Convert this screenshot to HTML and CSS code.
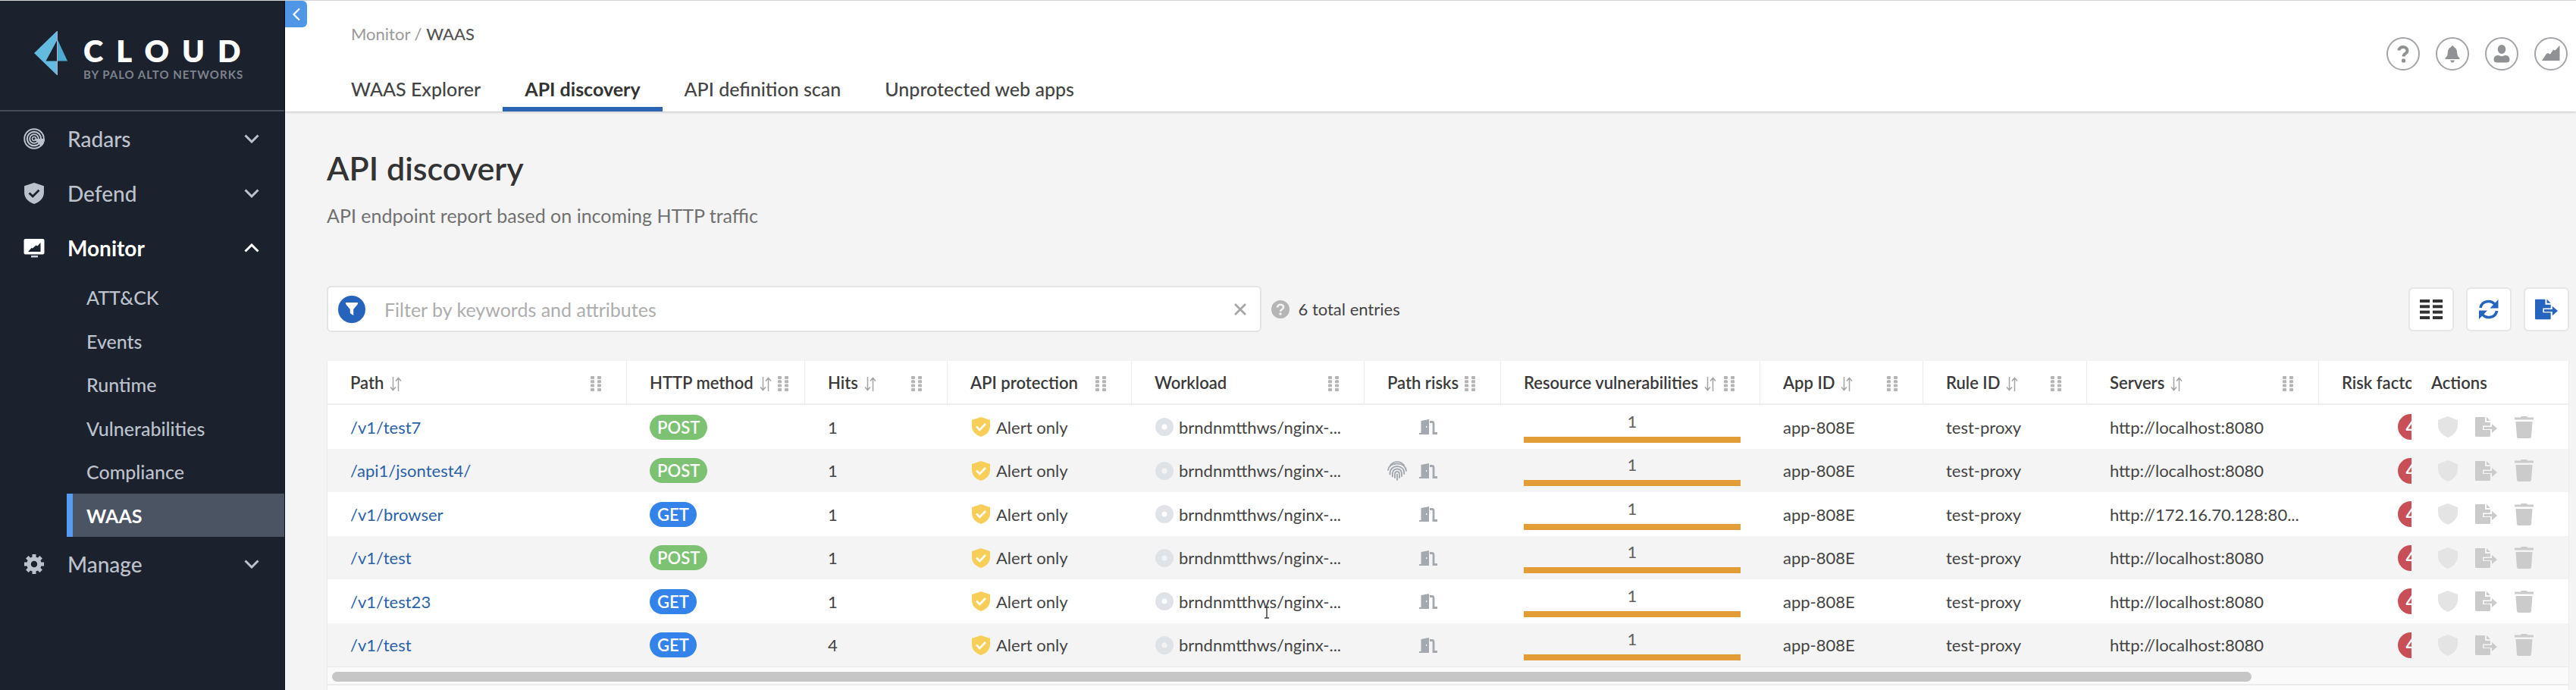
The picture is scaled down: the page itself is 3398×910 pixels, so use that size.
FILE: index.html
```html
<!DOCTYPE html>
<html lang="en">
<head>
<meta charset="utf-8">
<title>API discovery - WAAS</title>
<link rel="stylesheet" href="styles.css">
</head>
<body>
<svg class="sprite" aria-hidden="true">
  <symbol id="i-sort" viewBox="0 0 16 19"><path d="M4.5 0V17M1 13.500l3.500 4 3.500-4M11.500 19V2M8 5.500l3.500-4 3.500 4" fill="none" stroke="currentColor" stroke-width="1.500"/></symbol>
  <symbol id="i-drag" viewBox="0 0 14 20"><g fill="currentColor"><rect x="0" y="0" width="5" height="4" rx="1"/><rect x="9" y="0" width="5" height="4" rx="1"/><rect x="0" y="5.300" width="5" height="4" rx="1"/><rect x="9" y="5.300" width="5" height="4" rx="1"/><rect x="0" y="10.600" width="5" height="4" rx="1"/><rect x="9" y="10.600" width="5" height="4" rx="1"/><rect x="0" y="16" width="5" height="4" rx="1"/><rect x="9" y="16" width="5" height="4" rx="1"/></g></symbol>
  <symbol id="i-check-shield" viewBox="0 0 24 26"><path d="M12 0 24 4V12C24 19 18.500 24 12 26 5.500 24 0 19 0 12V4Z" fill="currentColor"/><path class="tick" d="M6 12.500l4.300 4.300L18 9" fill="none" stroke-width="2.600"/></symbol>
  <symbol id="i-shield" viewBox="0 0 26 28"><path d="M13 0 26 5V12C26 20 19 26 13 28 7 26 0 20 0 12V5Z" fill="currentColor"/></symbol>
  <symbol id="i-disc" viewBox="0 0 24 24"><path fill-rule="evenodd" d="M12 0a12 12 0 1 0 0 24 12 12 0 0 0 0-24Zm0 8.500a3.500 3.500 0 1 1 0 7 3.500 3.500 0 0 1 0-7Z" fill="currentColor"/></symbol>
  <symbol id="i-door" viewBox="0 0 24 20"><path fill-rule="evenodd" d="M2.500 2 13 0V20H0V18H2.500ZM9 9v2h1.300V9Z" fill="currentColor"/><path d="M14 3.500h3Q19 3.500 19 6V18.500H24" fill="none" stroke="currentColor" stroke-width="2.800"/></symbol>
  <symbol id="i-finger" viewBox="0 0 26 26"><g fill="none" stroke="currentColor" stroke-width="1.900" stroke-linecap="round"><path d="M4 5.500C8.500-.4 17.500-.4 22 5.500"/><path d="M1 12C2 4.500 8 3.600 13 3.600S24 5 25 13"/><path d="M3.500 17.500C3.200 10 8 7 13 7s9.500 3 9.200 10"/><path d="M6.800 20.500C6.300 14 8 10.500 13 10.500s6.500 3.500 6 9.500"/><path d="M10 22c-.3-5-.3-8 3-8s3.300 3 3 8"/><path d="M13 17.500V25"/></g></symbol>
  <symbol id="i-export" viewBox="0 0 29 26"><path d="M1 0H13V7H20V11.500H10V17H20V24.500Q20 26 18.500 26H1.500Q0 26 0 24.500V1Q0 0 1 0ZM15 0 20 5H15Z" fill="currentColor"/><path d="M11.500 13H22V9L29 15 22 21V16H11.500Z" fill="currentColor"/></symbol>
  <symbol id="i-trash" viewBox="0 0 25 29"><path d="M8 1.500Q8 0 9.500 0h6Q17 0 17 1.500H25V4.500H0V1.500ZM1.500 7H23.500L22 27Q21.800 29 20 29H5Q3.200 29 3 27Z" fill="currentColor"/></symbol>
  <symbol id="i-chevron" viewBox="0 0 20 12"><path d="M1.500 1.500 10 10 18.500 1.500" fill="none" stroke="currentColor" stroke-width="3"/></symbol>
</svg>

<div class="app">
  <aside class="sidebar">
    <div class="brand">
      <svg class="brand-mark" viewBox="0 0 44 58" aria-hidden="true"><path d="M30 0V12.500L15.500 39.500H30V58L0 29Z" fill="#63bbdf"/><path d="M31 11.500 44 39.500H31Z" fill="#4da9cf"/><path d="M30.500 0V58" stroke="#b9a8c8" stroke-width="1"/></svg>
      <div class="brand-text"><span class="brand-name">CLOUD</span><span class="brand-sub">BY PALO ALTO NETWORKS</span></div>
    </div>
    <nav class="nav">
      <button class="nav-item"><svg class="nav-icon" viewBox="0 0 28 28"><g fill="none" stroke="currentColor"><circle cx="14" cy="14" r="12.800" stroke-width="2"/><circle cx="14" cy="14" r="9.200" stroke-width="2.200"/><circle cx="14" cy="14" r="5.800" stroke-width="2"/><circle cx="14" cy="14" r="2.500" stroke-width="1.500"/></g><path d="M14 14H28A14 14 0 0 1 23.500 24.200Z" fill="currentColor"/></svg><span>Radars</span><svg class="chev"><use href="#i-chevron"/></svg></button>
      <button class="nav-item"><svg class="nav-icon shield-dark"><use href="#i-check-shield"/></svg><span>Defend</span><svg class="chev"><use href="#i-chevron"/></svg></button>
      <button class="nav-item is-open" aria-expanded="true"><svg class="nav-icon" viewBox="0 0 28 28"><path fill-rule="evenodd" d="M2.500 2H25.500Q27.500 2 27.500 4V20.500Q27.500 22.500 25.500 22.500H2.500Q.5 22.500 .5 20.500V4Q.5 2 2.500 2ZM6 19H22.500V7L18.500 11.500 16.500 10.500 12 14.500 10.500 14Z" fill="currentColor"/><path d="M10 24h9v2.500h-9Z" fill="currentColor" opacity=".8"/></svg><span>Monitor</span><svg class="chev"><use href="#i-chevron"/></svg></button>
      <ul class="subnav">
        <li><a href="#">ATT&amp;CK</a></li>
        <li><a href="#">Events</a></li>
        <li><a href="#">Runtime</a></li>
        <li><a href="#">Vulnerabilities</a></li>
        <li><a href="#">Compliance</a></li>
        <li><a href="#" class="is-active" aria-current="page">WAAS</a></li>
      </ul>
      <button class="nav-item"><svg class="nav-icon" viewBox="0 0 28 28"><circle cx="14" cy="14" r="7" fill="none" stroke="currentColor" stroke-width="5.500"/><g stroke="currentColor" stroke-width="5"><path d="M14 1V6M14 22V27M1 14H6M22 14H27M4.800 4.800l3.500 3.500M19.700 19.700l3.500 3.500M4.800 23.200l3.500-3.500M19.700 8.300l3.500-3.500"/></g></svg><span>Manage</span><svg class="chev"><use href="#i-chevron"/></svg></button>
    </nav>
  </aside>

  <main class="main">
    <button class="collapse" aria-label="Collapse menu"><svg viewBox="0 0 12 18"><path d="M10 1.500 2.500 9 10 16.500" fill="none" stroke="#fff" stroke-width="2.200"/></svg></button>
    <header class="topbar">
      <div class="topbar-left">
        <div class="crumbs"><a href="#">Monitor</a> / <span>WAAS</span></div>
        <nav class="tabs">
          <a href="#">WAAS Explorer</a>
          <a href="#" class="is-active">API discovery</a>
          <a href="#">API definition scan</a>
          <a href="#">Unprotected web apps</a>
        </nav>
      </div>
      <div class="top-icons">
        <button aria-label="Help"><svg viewBox="0 0 24 24"><path d="M6.500 7.500C6.500 1.500 17.500 1.500 17.500 8c0 4-5 3.300-5 7.500" fill="none" stroke="currentColor" stroke-width="4"/><rect x="10" y="18.500" width="5" height="5" rx="1.500" fill="currentColor"/></svg></button>
        <button aria-label="Alerts"><svg viewBox="0 0 24 24"><path d="M12 1c1 0 1.500 1.500 2.500 2.500 3 1.500 3.500 4 3.800 8 .2 3 1.200 4.500 3.200 6V19h-19v-1.500c2-1.500 3-3 3.200-6 .3-4 .8-6.500 3.800-8C10.500 2.500 11 1 12 1ZM9 20.500h6q-1 3-3 3t-3-3Z" fill="currentColor"/></svg></button>
        <button aria-label="Account"><svg viewBox="0 0 24 24"><ellipse cx="12" cy="6" rx="5.300" ry="6" fill="currentColor"/><path d="M1.500 20c0-5 3-6 6.500-6 2.500 1.500 5.500 1.500 8 0 3.500 0 6.500 1 6.500 6 0 2.500-2 3.500-4 3.500h-13c-2 0-4-1-4-3.500Z" fill="currentColor"/></svg></button>
        <button aria-label="Usage"><svg viewBox="0 0 24 24"><path d="M0 21 6 12l2-1 3 1.500 4-6 2.500 1L23.500 1V21Z" fill="currentColor"/></svg></button>
      </div>
    </header>

    <section class="content">
      <h1>API discovery</h1>
      <p class="desc">API endpoint report based on incoming HTTP traffic</p>
      <div class="toolbar">
        <div class="filter">
          <span class="funnel"><svg viewBox="0 0 16 17"><path d="M0 0H16V2L10.200 9V17L5.800 14V9L0 2Z" fill="#fff"/></svg></span>
          <input type="text" aria-label="Filter" placeholder="Filter by keywords and attributes">
          <button class="clear" aria-label="Clear"><svg viewBox="0 0 16 16"><path d="M1 1 15 15M15 1 1 15" stroke="currentColor" stroke-width="2.600"/></svg></button>
        </div>
        <svg class="hint" viewBox="0 0 24 24"><circle cx="12" cy="12" r="12" fill="#b5b5b5"/><path d="M8 9.500C8 4.500 16 4.500 16 9.300c0 3-4 2.700-4 5.500" fill="none" stroke="#f4f4f4" stroke-width="2.600"/><circle cx="12" cy="18" r="1.700" fill="#f4f4f4"/></svg>
        <span class="total">6 total entries</span>
        <div class="tools">
          <button aria-label="Columns"><svg viewBox="0 0 30 28"><g fill="#333"><rect y="1" width="13" height="4"/><rect x="17" y="1" width="13" height="4"/><rect y="8.300" width="13" height="4"/><rect x="17" y="8.300" width="13" height="4"/><rect y="15.600" width="13" height="4"/><rect x="17" y="15.600" width="13" height="4"/><rect y="23" width="13" height="4"/><rect x="17" y="23" width="13" height="4"/></g></svg></button>
          <button aria-label="Refresh"><svg viewBox="0 0 30 28"><g fill="none" stroke="#2565c0" stroke-width="3.600"><path d="M4 12C5.500 2.500 18 .8 23.500 8"/><path d="M25.500 16C24 25.500 11.500 27.200 6 20"/></g><path d="M27.500 1V12.500H16.500ZM2 27V15.500H13Z" fill="#2565c0"/></svg></button>
          <button class="blue" aria-label="Export"><svg viewBox="0 0 29 26"><use href="#i-export"/></svg></button>
        </div>
      </div>

      <div class="card">
        <table class="grid">
          <colgroup><col class="c-path"><col class="c-method"><col class="c-hits"><col class="c-prot"><col class="c-work"><col class="c-risks"><col class="c-vuln"><col class="c-app"><col class="c-rule"><col class="c-serv"><col class="c-factor"><col class="c-act"></colgroup>
          <thead>
            <tr>
              <th><div class="h"><span>Path</span><svg class="sort"><use href="#i-sort"/></svg><svg class="drag"><use href="#i-drag"/></svg></div></th>
              <th><div class="h"><span>HTTP method</span><svg class="sort"><use href="#i-sort"/></svg><svg class="drag"><use href="#i-drag"/></svg></div></th>
              <th><div class="h"><span>Hits</span><svg class="sort"><use href="#i-sort"/></svg><svg class="drag"><use href="#i-drag"/></svg></div></th>
              <th><div class="h"><span>API protection</span><svg class="drag"><use href="#i-drag"/></svg></div></th>
              <th><div class="h"><span>Workload</span><svg class="drag"><use href="#i-drag"/></svg></div></th>
              <th><div class="h"><span>Path risks</span><svg class="drag"><use href="#i-drag"/></svg></div></th>
              <th><div class="h"><span>Resource vulnerabilities</span><svg class="sort"><use href="#i-sort"/></svg><svg class="drag"><use href="#i-drag"/></svg></div></th>
              <th><div class="h"><span>App ID</span><svg class="sort"><use href="#i-sort"/></svg><svg class="drag"><use href="#i-drag"/></svg></div></th>
              <th><div class="h"><span>Rule ID</span><svg class="sort"><use href="#i-sort"/></svg><svg class="drag"><use href="#i-drag"/></svg></div></th>
              <th><div class="h"><span>Servers</span><svg class="sort"><use href="#i-sort"/></svg><svg class="drag"><use href="#i-drag"/></svg></div></th>
              <th class="factor">Risk factors</th>
              <th class="act">Actions</th>
            </tr>
          </thead>
          <tbody>
            <tr>
              <td><a href="#">/v1/test7</a></td><td><span class="pill post">POST</span></td><td>1</td>
              <td><div class="ic alert"><svg><use href="#i-check-shield"/></svg>Alert only</div></td>
              <td><div class="ic image"><svg><use href="#i-disc"/></svg>brndnmtthws/nginx-...</div></td>
              <td><div class="risks"><i></i><svg class="door"><use href="#i-door"/></svg></div></td>
              <td class="vuln">1<div class="bar"></div></td><td>app-808E</td><td>test-proxy</td><td>http://localhost:8080</td>
              <td class="factor"><span class="count">4</span></td>
              <td class="act"><div class="acts"><button aria-label="Protect"><svg><use href="#i-shield"/></svg></button><button aria-label="Export"><svg><use href="#i-export"/></svg></button><button aria-label="Delete"><svg><use href="#i-trash"/></svg></button></div></td>
            </tr>
            <tr>
              <td><a href="#">/api1/jsontest4/</a></td><td><span class="pill post">POST</span></td><td>1</td>
              <td><div class="ic alert"><svg><use href="#i-check-shield"/></svg>Alert only</div></td>
              <td><div class="ic image"><svg><use href="#i-disc"/></svg>brndnmtthws/nginx-...</div></td>
              <td><div class="risks"><svg class="finger"><use href="#i-finger"/></svg><svg class="door"><use href="#i-door"/></svg></div></td>
              <td class="vuln">1<div class="bar"></div></td><td>app-808E</td><td>test-proxy</td><td>http://localhost:8080</td>
              <td class="factor"><span class="count">4</span></td>
              <td class="act"><div class="acts"><button aria-label="Protect"><svg><use href="#i-shield"/></svg></button><button aria-label="Export"><svg><use href="#i-export"/></svg></button><button aria-label="Delete"><svg><use href="#i-trash"/></svg></button></div></td>
            </tr>
            <tr>
              <td><a href="#">/v1/browser</a></td><td><span class="pill get">GET</span></td><td>1</td>
              <td><div class="ic alert"><svg><use href="#i-check-shield"/></svg>Alert only</div></td>
              <td><div class="ic image"><svg><use href="#i-disc"/></svg>brndnmtthws/nginx-...</div></td>
              <td><div class="risks"><i></i><svg class="door"><use href="#i-door"/></svg></div></td>
              <td class="vuln">1<div class="bar"></div></td><td>app-808E</td><td>test-proxy</td><td>http://172.16.70.128:80...</td>
              <td class="factor"><span class="count">4</span></td>
              <td class="act"><div class="acts"><button aria-label="Protect"><svg><use href="#i-shield"/></svg></button><button aria-label="Export"><svg><use href="#i-export"/></svg></button><button aria-label="Delete"><svg><use href="#i-trash"/></svg></button></div></td>
            </tr>
            <tr>
              <td><a href="#">/v1/test</a></td><td><span class="pill post">POST</span></td><td>1</td>
              <td><div class="ic alert"><svg><use href="#i-check-shield"/></svg>Alert only</div></td>
              <td><div class="ic image"><svg><use href="#i-disc"/></svg>brndnmtthws/nginx-...</div></td>
              <td><div class="risks"><i></i><svg class="door"><use href="#i-door"/></svg></div></td>
              <td class="vuln">1<div class="bar"></div></td><td>app-808E</td><td>test-proxy</td><td>http://localhost:8080</td>
              <td class="factor"><span class="count">4</span></td>
              <td class="act"><div class="acts"><button aria-label="Protect"><svg><use href="#i-shield"/></svg></button><button aria-label="Export"><svg><use href="#i-export"/></svg></button><button aria-label="Delete"><svg><use href="#i-trash"/></svg></button></div></td>
            </tr>
            <tr>
              <td><a href="#">/v1/test23</a></td><td><span class="pill get">GET</span></td><td>1</td>
              <td><div class="ic alert"><svg><use href="#i-check-shield"/></svg>Alert only</div></td>
              <td><div class="ic image"><svg><use href="#i-disc"/></svg>brndnmtthws/nginx-...<svg class="cursor" viewBox="0 0 8 16"><path d="M1 1H3.500L4 2 4.500 1H7M4 2V14M1 15H3.500L4 14 4.500 15H7" fill="none" stroke="#444" stroke-width="1.500"/></svg></div></td>
              <td><div class="risks"><i></i><svg class="door"><use href="#i-door"/></svg></div></td>
              <td class="vuln">1<div class="bar"></div></td><td>app-808E</td><td>test-proxy</td><td>http://localhost:8080</td>
              <td class="factor"><span class="count">4</span></td>
              <td class="act"><div class="acts"><button aria-label="Protect"><svg><use href="#i-shield"/></svg></button><button aria-label="Export"><svg><use href="#i-export"/></svg></button><button aria-label="Delete"><svg><use href="#i-trash"/></svg></button></div></td>
            </tr>
            <tr>
              <td><a href="#">/v1/test</a></td><td><span class="pill get">GET</span></td><td>4</td>
              <td><div class="ic alert"><svg><use href="#i-check-shield"/></svg>Alert only</div></td>
              <td><div class="ic image"><svg><use href="#i-disc"/></svg>brndnmtthws/nginx-...</div></td>
              <td><div class="risks"><i></i><svg class="door"><use href="#i-door"/></svg></div></td>
              <td class="vuln">1<div class="bar"></div></td><td>app-808E</td><td>test-proxy</td><td>http://localhost:8080</td>
              <td class="factor"><span class="count">4</span></td>
              <td class="act"><div class="acts"><button aria-label="Protect"><svg><use href="#i-shield"/></svg></button><button aria-label="Export"><svg><use href="#i-export"/></svg></button><button aria-label="Delete"><svg><use href="#i-trash"/></svg></button></div></td>
            </tr>
          </tbody>
        </table>
        <div class="scroll"><div class="thumb"></div></div>
      </div>
    </section>
  </main>
</div>
</body>
</html>
```
FILE: styles.css
```css
*{box-sizing:border-box}
body{margin:0;font-family:Lato,"Liberation Sans",sans-serif;font-size:22px;color:#444;background:#f4f4f4}
a{color:inherit;text-decoration:none}
button{margin:0;padding:0;border:0;background:none;font:inherit;color:inherit}
svg{display:block;flex:none}
.sprite{position:absolute;width:0;height:0}
.app{display:flex;min-height:100vh;border-top:1px solid #d9d9d9}

.sidebar{flex:none;width:376px;background:#1b212d;color:#bcc2cc;border-right:1px solid #0d1119}
.brand{display:flex;align-items:center;gap:21px;height:146px;padding:0 0 6px 45px;border-bottom:2px solid #434a57}
.brand-mark{width:44px;height:58px}
.brand-text{display:flex;flex-direction:column;padding-top:17px}
.brand-name{font-size:40px;line-height:40px;font-weight:800;letter-spacing:17px;color:#fff}
.brand-sub{font-size:15px;line-height:23px;font-weight:700;letter-spacing:1px;color:#7d828b}
.nav-item{display:flex;align-items:center;width:100%;height:72px;padding:0 33px 0 31px;font-size:28px;font-weight:500;text-align:left}
.nav-item span{flex:1;padding-left:30px}
.nav-icon{width:28px;height:28px}
.shield-dark{--tick:#1b212d}
.tick{stroke:var(--tick)}
.chev{width:20px;height:12px}
.is-open{color:#fff;font-weight:700}
.is-open .chev{transform:rotate(180deg)}
.subnav{margin:0;padding:0 0 0 88px;list-style:none;font-size:25px;font-weight:500}
.subnav a{display:flex;align-items:center;height:58px;padding-left:18px;border-left:8px solid transparent}
.subnav li:nth-child(even) a{height:57px}
.subnav .is-active{background:#4a5463;border-left-color:#569cf3;color:#fff;font-weight:700}

.main{position:relative;display:flex;flex-direction:column;flex:1;min-width:0}
.collapse{position:absolute;left:0;top:0;display:flex;align-items:center;justify-content:center;width:29px;height:35px;border-radius:0 6px 6px 0;background:#4f97e6}
.collapse svg{width:12px;height:18px}
.topbar{display:flex;justify-content:space-between;height:146px;padding:0 11px 0 58px;background:#fff;box-shadow:0 1px 3px rgba(0,0,0,.2)}
.topbar-left{display:flex;flex-direction:column;justify-content:space-between}
.crumbs{padding:29px 0 0 29px;line-height:30px;color:#9a9a9a}
.crumbs span{color:#555;font-weight:500}
.tabs{display:flex;font-size:25px;font-weight:500}
.tabs a{height:58px;padding:13px 29px 0;line-height:30px;border-bottom:6px solid transparent}
.tabs .is-active{border-bottom-color:#2a65b5;font-weight:700;color:#333}
.top-icons{display:flex;align-items:center;gap:21px;padding-bottom:6px}
.top-icons button{display:flex;align-items:center;justify-content:center;width:44px;height:44px;border:2px solid #a3a5a8;border-radius:50%;color:#8f9194}
.top-icons svg{width:24px;height:24px}

.content{display:flex;flex-direction:column;flex:1;padding:49px 9px 0 55px}
h1{margin:0;font-size:43px;line-height:52px;font-weight:600;color:#333}
.desc{margin:20px 0 77px;font-size:25px;line-height:32px;color:#707070}
.toolbar{display:flex;align-items:center;margin-bottom:38px}
.filter{display:flex;align-items:center;width:41.7%;height:61px;padding:0 18px 0 13px;background:#fff;border:2px solid #e4e4e4;border-radius:6px}
.funnel{display:flex;align-items:center;justify-content:center;width:36px;height:36px;border-radius:50%;background:#2663bd}
.funnel svg{width:16px;height:17px}
.filter input{flex:1;min-width:0;padding:0 0 0 25px;border:0;outline:0;background:none;font:inherit;font-size:25px;color:#444}
.filter input::placeholder{color:#adadad;opacity:1}
.clear{color:#a5a5a5}
.clear svg{width:16px;height:16px}
.hint{width:24px;height:24px;margin:0 11px 0 13px}
.total{font-size:22px;line-height:30px}
.tools{display:flex;gap:16px;margin-left:auto}
.tools button{display:flex;align-items:center;justify-content:center;width:60px;height:58px;background:#fff;border:2px solid #e6e6e6;border-radius:6px}
.tools svg{width:30px;height:28px}
.blue{color:#2565c0}

.card{flex:1;background:#fcfcfc;border:1px solid #ebebeb;border-width:0 1px}
.grid{width:100%;table-layout:fixed;border-collapse:separate;border-spacing:0;background:#fff}
.c-path{width:395px}.c-method{width:235px}.c-hits{width:188px}.c-prot{width:243px}.c-work{width:307px}.c-risks{width:180px}
.c-vuln{width:342px}.c-app{width:215px}.c-rule{width:216px}.c-serv{width:306px}.c-factor{width:122px}.c-act{width:207px}
.grid th{height:58px;padding:0 33px 0 30px;text-align:left;font-weight:600;color:#3a3a3a;white-space:nowrap;border-right:1px solid #ececec;border-bottom:2px solid #efefef}
.h{display:flex;align-items:center}
.sort{width:16px;height:19px;margin:4px 8px 0 8px;color:#a5a5a5}
.drag{width:14px;height:20px;margin:4px 0 0 auto;color:#b5b5b5}
.grid td{height:58px;padding:0 0 0 30px;white-space:nowrap}
.grid tr:nth-child(even) td{height:57px;background:#f4f4f4}
.grid td a{color:#2b62a8}
.pill{display:inline-flex;align-items:center;height:33px;padding:0 10px;border-radius:17px;font-weight:600;color:#fff}
.post{background:#7dc273}
.get{background:#3483ea}
.ic{position:relative;display:flex;align-items:center}
.alert svg{width:24px;height:26px;margin:0 8px 0 2px;color:#f7cf58;--tick:#fff}
.image svg{width:24px;height:24px;margin:0 7px 0 1px;color:#dfe3e8}
.image .cursor{position:absolute;left:144px;top:20px;width:8px;height:16px;margin:0}
.risks{display:flex;align-items:center;gap:16px;color:#a4a9b0}
.risks i{width:26px}
.finger{width:26px;height:26px}
.door{width:24px;height:20px}
.grid td.vuln{padding:0 26px 0 30px;text-align:center;color:#606060;line-height:26px}
.bar{height:8px;margin:7px 0 0;background:#e39d37}
.grid .factor{overflow:hidden;padding-right:0;border-right:0}
.count{display:flex;align-items:center;justify-content:center;width:34px;height:34px;margin-left:74px;border-radius:50%;background:#c94f56;color:#fff;font-weight:700}
.grid th.act{padding:0 0 0 26px;border-right:0}
.grid td.act{padding:0 0 0 35px}
.acts{display:flex;align-items:center;gap:23px;color:#cbcbcb}
.acts button:nth-child(1){color:#e4e4e4}
.acts button:nth-child(1) svg{width:26px;height:28px}
.acts button:nth-child(2) svg{width:29px;height:26px}
.acts button:nth-child(3) svg{width:25px;height:29px}
.scroll{height:25px;padding:6px;background:#fafafa;border:solid #ebebeb;border-width:1px 0 2px}
.thumb{width:86%;height:13px;border-radius:7px;background:#c6c6c6}
```
